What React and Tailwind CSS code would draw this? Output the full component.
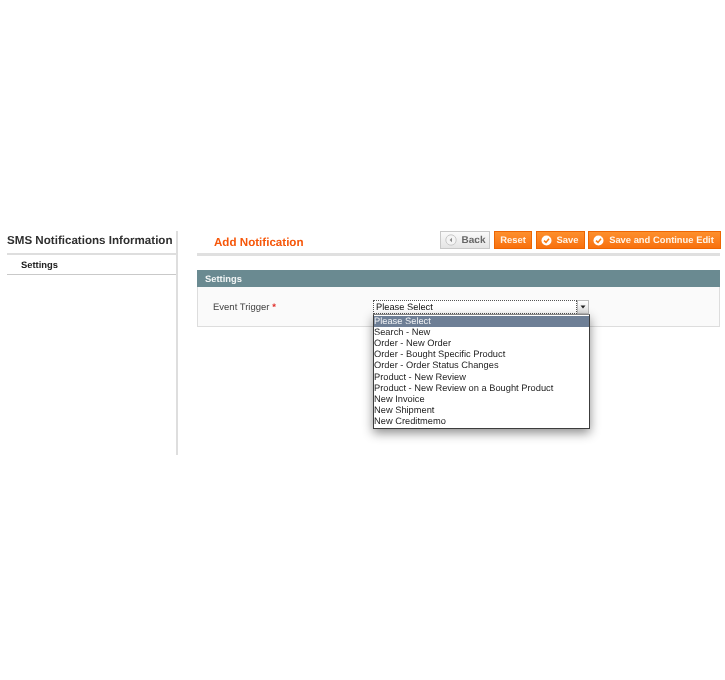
import React from "react";

const font = { fontFamily: '"Liberation Sans", Arial, sans-serif' };

function Check() {
  return (
    <svg width="11" height="11" viewBox="0 0 11 11" className="shrink-0">
      <circle cx="5.5" cy="5.5" r="5" fill="#fff" />
      <path d="M3 5.6 L5 7.4 L8 3.8" fill="none" stroke="#f77c16" strokeWidth="1.6" />
    </svg>
  );
}

function Back() {
  return (
    <svg width="12" height="12" viewBox="0 0 12 12" className="shrink-0">
      <circle cx="6" cy="6" r="5.2" fill="#f4f4f4" stroke="#c9c9c9" />
      <path d="M7 3.8 L4.6 6 L7 8.2 Z" fill="#8a8a8a" />
    </svg>
  );
}

function OrangeButton({ className, icon, children }) {
  return (
    <div className={`flex h-[18px] items-center justify-center gap-[5px] whitespace-nowrap border border-[#ed6502] bg-gradient-to-b from-[#fd8f2c] to-[#f8700c] text-[9.4px] font-bold text-[#fff3e6] ${className}`}>
      {icon && <Check />}
      <span className="pt-[1px]">{children}</span>
    </div>
  );
}

const options = [
  "Search - New",
  "Order - New Order",
  "Order - Bought Specific Product",
  "Order - Order Status Changes",
  "Product - New Review",
  "Product - New Review on a Bought Product",
  "New Invoice",
  "New Shipment",
  "New Creditmemo",
];

export default function App() {
  return (
    <div className="h-[680px] w-[725px] overflow-hidden bg-white pt-[231px] blur-[0.35px] [text-rendering:geometricPrecision]" style={font}>
      <div className="flex items-start">
        <aside className="ml-[7px] h-[224px] w-[171px] border-r-2 border-[#dedede]">
          <div className="h-[24px] whitespace-nowrap border-b-2 border-[#dedede] pt-[1.5px] text-[11.6px] leading-[16px] font-bold text-[#2f2f2f]">
            SMS Notifications Information
          </div>
          <div className="h-[20px] border-b border-[#c9c9c9] pl-[14px] pt-[3px] text-[9.4px] leading-[14px] font-bold text-[#222]">
            Settings
          </div>
        </aside>

        <main className="ml-[19px] w-[523px]">
          <div className="flex h-[25px] items-start justify-between border-b-[3px] border-[#e0e0e0]">
            <h1 className="ml-[17px] whitespace-nowrap pt-[4px] text-[11.6px] leading-[16px] font-bold text-[#f6570a]">Add Notification</h1>
            <div className="flex gap-[4px]">
              <div className="flex h-[18px] w-[50px] items-center justify-center gap-[5px] border border-[#c8c8c8] bg-gradient-to-b from-[#fafafa] to-[#e4e4e4] text-[10px] font-bold text-[#666]">
                <Back />
                <span>Back</span>
              </div>
              <OrangeButton className="w-[38px]">Reset</OrangeButton>
              <OrangeButton className="w-[49px] pr-[2px]" icon>Save</OrangeButton>
              <OrangeButton className="mr-[-1px] ml-[-1px] w-[133px] pr-[2px]" icon>Save and Continue Edit</OrangeButton>
            </div>
          </div>

          <div className="mt-[14px] h-[17px] bg-[#6a8a91] pl-[8px] text-[9.4px] leading-[17px] font-bold text-[#f1f5f5]">
            Settings
          </div>
          <div className="relative flex h-[40px] border-x border-b border-[#dddddd] bg-[#fafafa] pl-[15px] pt-[14px]">
            <label className="w-[160px] whitespace-nowrap text-[9.5px] leading-[13px] text-[#444]">
              Event Trigger <span className="font-bold text-[#e02b27]">*</span>
            </label>
            <div className="mt-[-1px] flex h-[14px] w-[216px]">
              <div className="h-full w-[204px] border border-dotted border-[#555] bg-white pl-[2px] text-[9.3px] leading-[12px] text-[#111]">
                Please Select
              </div>
              <div className="flex h-full w-[12px] items-center justify-center border border-[#bbb] bg-gradient-to-b from-white to-[#ddd]">
                <svg width="6" height="4" viewBox="0 0 6 4"><path d="M0.5 0.5 L5.5 0.5 L3 3.5 Z" fill="#222" /></svg>
              </div>
            </div>
            <div className="absolute left-[175px] top-[27px] z-10 w-[217px] border border-[#3c3c3c] border-t-[#888] bg-white pt-[0.5px] text-[9.3px] leading-[11.2px] text-[#1e1e1e] shadow-[0_4px_10px_rgba(0,0,0,0.45)]">
              <div className="bg-[#6e7f96] text-[#f0f2f5]">Please Select</div>
              {options.map((o) => (
                <div key={o}>{o}</div>
              ))}
            </div>
          </div>
        </main>
      </div>
    </div>
  );
}
